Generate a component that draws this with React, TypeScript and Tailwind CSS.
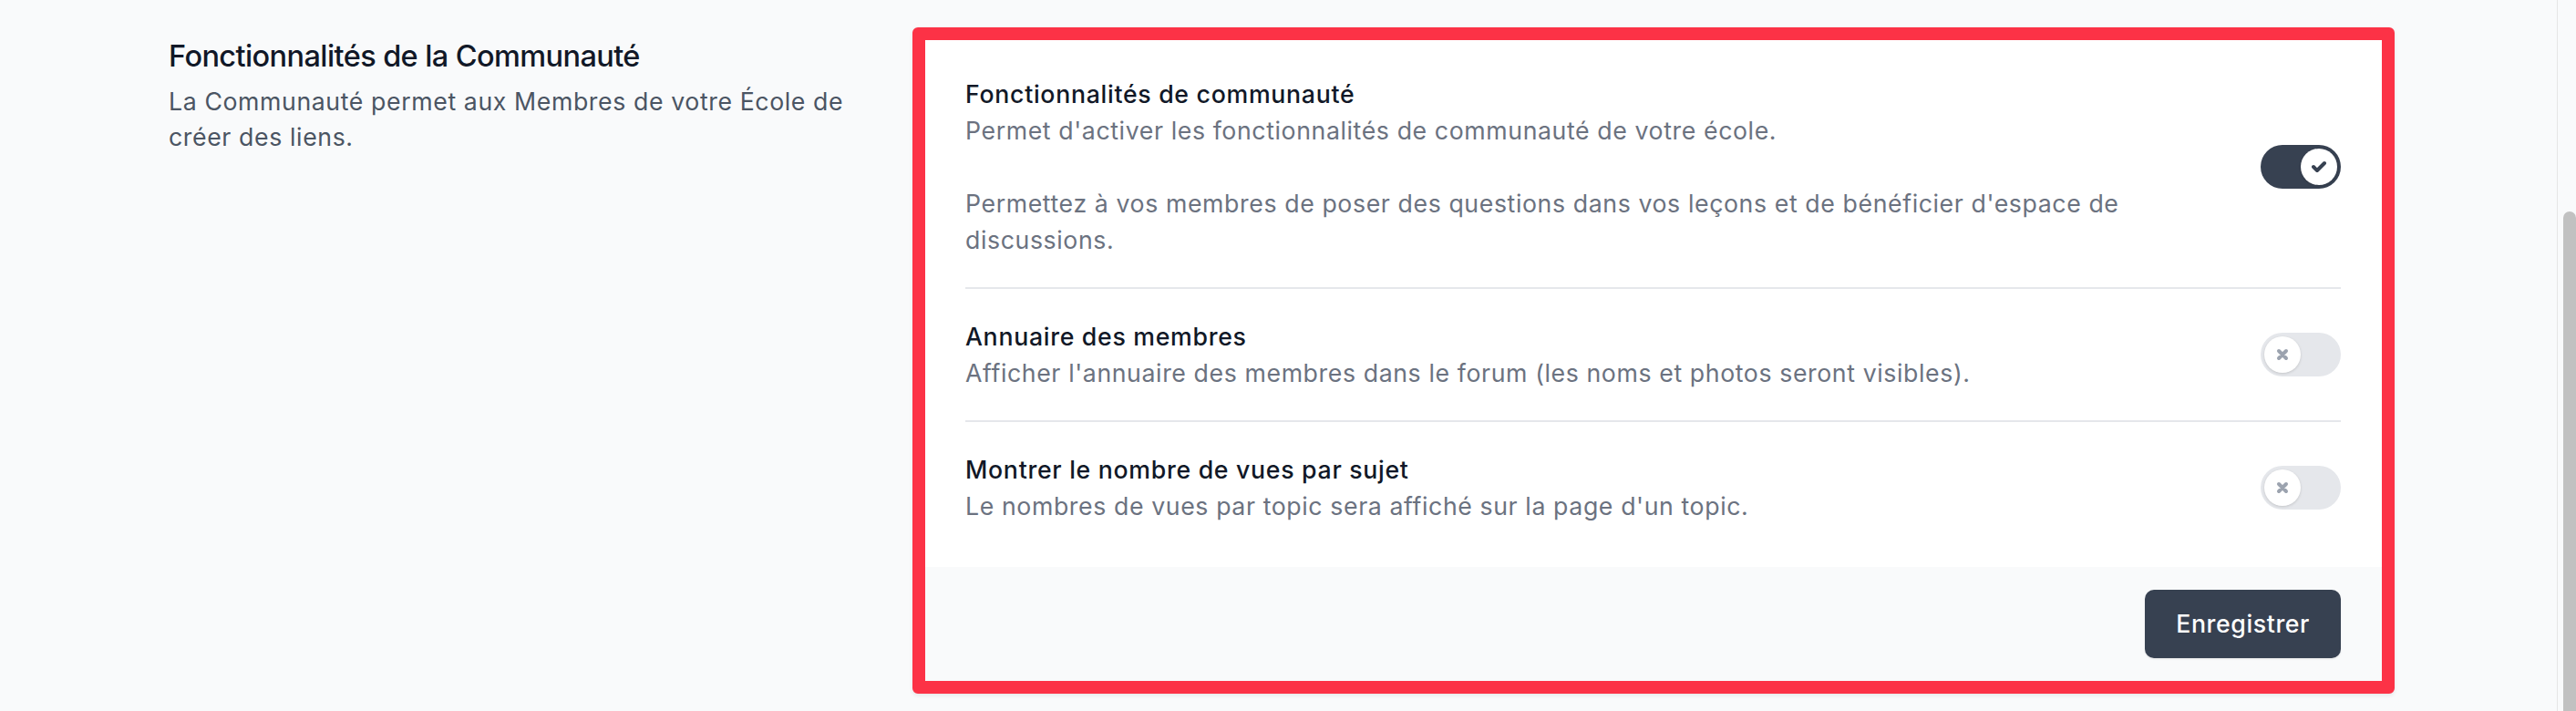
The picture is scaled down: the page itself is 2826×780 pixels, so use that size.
import React from "react";

type settingType = {
  title: string;
  lines: string[];
  enabled: boolean;
};

const settings: settingType[] = [
  {
    title: "Fonctionnalités de communauté",
    lines: [
      "Permet d'activer les fonctionnalités de communauté de votre école.",
      "Permettez à vos membres de poser des questions dans vos leçons et de bénéficier d'espace de discussions.",
    ],
    enabled: true,
  },
  {
    title: "Annuaire des membres",
    lines: [
      "Afficher l'annuaire des membres dans le forum (les noms et photos seront visibles).",
    ],
    enabled: false,
  },
  {
    title: "Montrer le nombre de vues par sujet",
    lines: ["Le nombres de vues par topic sera affiché sur la page d'un topic."],
    enabled: false,
  },
];

const Toggle = ({ on }: { on: boolean }) => {
  return (
    <button
      className={`flex h-[48px] w-[88px] shrink-0 items-center rounded-full p-[4px] ${
        on ? "justify-end bg-[#374151]" : "justify-start bg-[#e5e7eb]"
      }`}
    >
      <span className="flex h-[40px] w-[40px] items-center justify-center rounded-full bg-white shadow-[0_1px_3px_rgba(0,0,0,0.15)]">
        {on ? (
          <svg className="h-[24px] w-[24px] text-[#374151]" fill="currentColor" viewBox="0 0 12 12">
            <path d="M3.707 5.293a1 1 0 00-1.414 1.414l1.414-1.414zM5 8l-.707.707a1 1 0 001.414 0L5 8zm4.707-3.293a1 1 0 00-1.414-1.414l1.414 1.414zm-7.414 2l2 2 1.414-1.414-2-2-1.414 1.414zm3.414 2l4-4-1.414-1.414-4 4 1.414 1.414z" />
          </svg>
        ) : (
          <svg className="h-[24px] w-[24px] text-[#9ca3af]" fill="none" viewBox="0 0 12 12">
            <path
              d="M4 8l2-2m0 0l2-2M6 6L4 4m2 2l2 2"
              stroke="currentColor"
              strokeWidth="2"
              strokeLinecap="round"
              strokeLinejoin="round"
            />
          </svg>
        )}
      </span>
    </button>
  );
};

const App = () => {
  return (
    <div className="flex h-[780px] w-full overflow-hidden bg-[#f9fafb] font-['Inter',sans-serif]">
      <div className="flex flex-1 items-start pl-[185px] pt-[30px]">
        {/* left description */}
        <div className="mt-[8px] w-[780px] shrink-0">
          <h2 className="text-[32.5px] font-medium leading-[47px] tracking-[-0.6px] text-[#111827]">
            Fonctionnalités de la Communauté
          </h2>
          <p className="mt-[7px] text-[26.7px] leading-[39px] tracking-[0.6px] text-[#4b5563]">
            La Communauté permet aux Membres de votre École de créer des liens.
          </p>
        </div>

        {/* card with the red highlight */}
        <div className="ml-[36px] w-[1626px] shrink-0 overflow-hidden rounded-[6px] border-[14px] border-[#fc3246] bg-white shadow-[0_2px_4px_rgba(0,0,0,0.08)]">
          <div className="pb-[15px] pl-[44px] pr-[45px] pt-[7px]">
            {settings.map((item, index) => (
              <div
                key={item.title}
                className={`flex items-center py-[32px] ${
                  index > 0 ? "border-t-2 border-[#e5e7eb]" : ""
                }`}
              >
                <div className="flex-1 pr-[60px]">
                  <div className="text-[26.7px] font-medium leading-[40px] tracking-[0.7px] text-[#111827]">
                    {item.title}
                  </div>
                  {item.lines.map((line, i) => (
                    <p
                      key={i}
                      className={`text-[26.7px] leading-[40px] tracking-[0.6px] text-[#6b7280] ${
                        i > 0 ? "mt-[40px]" : ""
                      }`}
                    >
                      {line}
                    </p>
                  ))}
                </div>
                <Toggle on={item.enabled} />
              </div>
            ))}
          </div>
          <div className="flex justify-end bg-[#f9fafb] py-[25px] pl-[44px] pr-[45px]">
            <button className="h-[75px] rounded-[10px] bg-[#374151] px-[34px] text-[26.7px] font-medium tracking-[0.6px] text-white shadow-[0_1px_2px_rgba(0,0,0,0.1)]">
              Enregistrer
            </button>
          </div>
        </div>
      </div>

      {/* scrollbar */}
      <div className="flex h-full w-[21px] shrink-0 justify-end border-l border-[#e6e6e6] bg-[#f9fafb]">
        <div className="mt-[232px] h-[600px] w-[14px] rounded-t-full bg-[#c1c1c1]" />
      </div>
    </div>
  );
};

export default App;
